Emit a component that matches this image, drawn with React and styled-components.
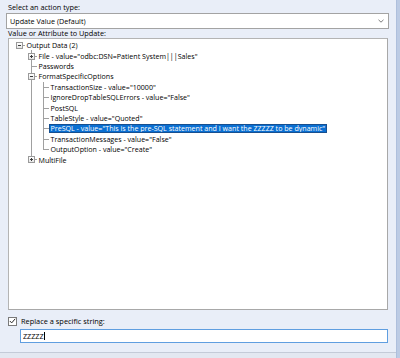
import React from 'react';
import styled, { createGlobalStyle, css } from 'styled-components';

const Global = createGlobalStyle`
  html, body { margin: 0; padding: 0; }
  body {
    width: 400px; height: 358px; overflow: hidden;
    background: #e9eef8;
    font-family: "Open Sans", "Noto Sans", sans-serif;
    color: #111;
  }
`;

const Frame = styled.div`
  width: 400px; height: 358px;
  display: flex;
  background: #e9eef8;
`;

const Main = styled.div`
  flex: 1;
  display: flex;
  flex-direction: column;
`;

const Content = styled.div`
  flex: 1;
  display: flex;
  flex-direction: column;
  padding: 2px 7px 0 6px;
`;

const Rail = styled.div`
  width: 3px;
  background: #bccbe4;
  border-left: 1px solid #aebfdc;
`;

const Footer = styled.div`
  height: 5px;
  border-top: 1px solid #c4cbd8;
  background: #e3e8f1;
`;

const Label = styled.div`
  font-size: 7.3px;
  line-height: ${p => p.$lh || 11}px;
  height: ${p => p.$lh || 11}px;
  padding-left: ${p => p.$indent || 2}px;
  white-space: nowrap;
  color: #000;
`;

const Select = styled.div`
  height: 16px;
  box-sizing: border-box;
  border: 1px solid #a3a3a3;
  background: #fff;
  display: flex;
  align-items: center;
  justify-content: space-between;
  padding: 0 4px 0 3px;
  font-size: 7.2px;
  color: #000;
`;

const TreeBox = styled.div`
  height: 272px;
  box-sizing: border-box;
  margin: 0 1px 0 2px;
  border: 1px solid #b4b4b4;
  border-right-color: #a8a8a8;
  border-bottom-color: #a8a8a8;
  background: #fff;
  padding: 1px 0 0 4px;
`;

const Row = styled.div`
  height: 10.4px;
  display: flex;
  align-items: stretch;
  font-size: 7.1px;
  white-space: nowrap;
`;

const Guide = styled.span`
  position: relative;
  width: 12px;
  flex: none;
  ${p => (p.$v === 'full') && css`
    &::before { content: ''; position: absolute; left: 6px; top: 0; bottom: 0; border-left: 1px solid #a0a0a0; }
  `}
  ${p => (p.$v === 'top') && css`
    &::before { content: ''; position: absolute; left: 6px; top: 0; height: 50%; border-left: 1px solid #a0a0a0; }
  `}
  ${p => p.$h && css`
    &::after { content: ''; position: absolute; left: 6px; right: 0; top: 50%; border-top: 1px solid #a0a0a0; }
  `}
`;

const Expander = styled.span`
  position: absolute;
  z-index: 1;
  left: 3px; top: 50%;
  width: 5px; height: 5px;
  margin-top: -3px;
  border: 1px solid #9a9a9a;
  background: linear-gradient(#ffffff, #e6e6e6);
  &::before {
    content: ''; position: absolute; left: 1px; right: 1px; top: 2px; border-top: 1px solid #3b3b3b;
  }
  ${p => p.$plus && css`
    &::after {
      content: ''; position: absolute; top: 1px; bottom: 1px; left: 2px; border-left: 1px solid #3b3b3b;
    }
  `}
`;

const Text = styled.span`
  display: flex;
  align-items: center;
  padding: 0 2px 0 1.5px;
  margin: 0.5px 0;
  color: #000;
  ${p => p.$selected && css`
    background: #0a6fd2;
    color: #fff;
    outline: 1px solid #174f8f;
    outline-offset: -1px;
  `}
`;

const CheckRow = styled.div`
  display: flex;
  align-items: center;
  gap: 4px;
  height: 10px;
  margin: 6px 0 0 2px;
  font-size: 7.4px;
  color: #000;
`;

const Box = styled.span`
  width: 9px; height: 9px;
  box-sizing: border-box;
  border: 1px solid #7a7a7a;
  background: #fff;
  display: flex;
  align-items: center;
  justify-content: center;
`;

const Input = styled.div`
  height: 14px;
  box-sizing: border-box;
  margin: 3px 1px 0 14px;
  border: 1px solid #5f9ee0;
  background: #fff;
  display: flex;
  align-items: center;
  padding-left: 2px;
  font-size: 7.2px;
  color: #000;
`;

const Caret = styled.span`
  width: 1px; height: 8px;
  background: #000;
  margin-left: 0.5px;
`;

const rows = [
  { g: [{ h: true, box: 'minus' }], t: 'Output Data (2)' },
  { g: [{}, { v: 'full', h: true, box: 'plus' }], t: 'File - value="odbc:DSN=Patient System|||Sales"' },
  { g: [{}, { v: 'full', h: true }], t: 'Passwords' },
  { g: [{}, { v: 'full', h: true, box: 'minus' }], t: 'FormatSpecificOptions' },
  { g: [{}, { v: 'full' }, { v: 'full', h: true }], t: 'TransactionSize - value="10000"' },
  { g: [{}, { v: 'full' }, { v: 'full', h: true }], t: 'IgnoreDropTableSQLErrors - value="False"' },
  { g: [{}, { v: 'full' }, { v: 'full', h: true }], t: 'PostSQL' },
  { g: [{}, { v: 'full' }, { v: 'full', h: true }], t: 'TableStyle - value="Quoted"' },
  { g: [{}, { v: 'full' }, { v: 'full', h: true }], t: 'PreSQL - value="This is the pre-SQL statement and I want the ZZZZZ to be dynamic"', sel: true },
  { g: [{}, { v: 'full' }, { v: 'full', h: true }], t: 'TransactionMessages - value="False"' },
  { g: [{}, { v: 'full' }, { v: 'top', h: true }], t: 'OutputOption - value="Create"' },
  { g: [{}, { v: 'top', h: true, box: 'plus' }], t: 'MultiFile' },
];

export default function App() {
  return (
    <>
      <Global />
      <Frame>
        <Main>
          <Content>
            <Label>Select an action type:</Label>
            <Select>
              <span>Update Value (Default)</span>
              <svg width="6" height="4" viewBox="0 0 6 4">
                <path d="M0.5 0.8 L3 3.2 L5.5 0.8" fill="none" stroke="#6d6d6d" strokeWidth="0.9" />
              </svg>
            </Select>
            <Label $lh={9}>Value or Attribute to Update:</Label>
            <TreeBox>
              {rows.map((r, i) => (
                <Row key={i}>
                  {r.g.map((c, j) => (
                    <Guide key={j} $v={c.v} $h={c.h}>
                      {c.box && <Expander $plus={c.box === 'plus'} />}
                    </Guide>
                  ))}
                  <Text $selected={r.sel}>{r.t}</Text>
                </Row>
              ))}
            </TreeBox>
            <CheckRow>
              <Box>
                <svg width="7" height="6" viewBox="0 0 7 6">
                  <path d="M0.8 3 L2.7 4.9 L6.2 0.8" fill="none" stroke="#2b2b2b" strokeWidth="1" />
                </svg>
              </Box>
              <span>Replace a specific string:</span>
            </CheckRow>
            <Input>
              <span>ZZZZZ</span>
              <Caret />
            </Input>
          </Content>
          <Footer />
        </Main>
        <Rail />
      </Frame>
    </>
  );
}
